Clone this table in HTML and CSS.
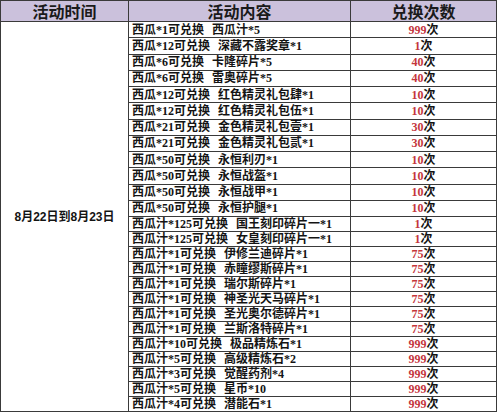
FILE: index.html
```html
<!DOCTYPE html>
<html lang="zh-CN">
<head>
<meta charset="utf-8">
<title>活动兑换</title>
<link rel="stylesheet" href="styles.css">
</head>
<body>
<div class="sheet">
  <div class="cell head">活动时间</div>
  <div class="cell head">活动内容</div>
  <div class="cell head">兑换次数</div>
  <div class="cell date">8月22日到8月23日</div>

  <div class="cell item"><span>西瓜*1可兑换</span><span class="gift">西瓜汁*5</span></div>
  <div class="cell count"><span class="n">999</span>次</div>
  <div class="cell item"><span>西瓜*12可兑换</span><span class="gift">深藏不露奖章*1</span></div>
  <div class="cell count"><span class="n">1</span>次</div>
  <div class="cell item"><span>西瓜*6可兑换</span><span class="gift">卡隆碎片*5</span></div>
  <div class="cell count"><span class="n">40</span>次</div>
  <div class="cell item"><span>西瓜*6可兑换</span><span class="gift">雷奥碎片*5</span></div>
  <div class="cell count"><span class="n">40</span>次</div>
  <div class="cell item"><span>西瓜*12可兑换</span><span class="gift">红色精灵礼包肆*1</span></div>
  <div class="cell count"><span class="n">10</span>次</div>
  <div class="cell item"><span>西瓜*12可兑换</span><span class="gift">红色精灵礼包伍*1</span></div>
  <div class="cell count"><span class="n">10</span>次</div>
  <div class="cell item"><span>西瓜*21可兑换</span><span class="gift">金色精灵礼包壹*1</span></div>
  <div class="cell count"><span class="n">30</span>次</div>
  <div class="cell item"><span>西瓜*21可兑换</span><span class="gift">金色精灵礼包贰*1</span></div>
  <div class="cell count"><span class="n">30</span>次</div>
  <div class="cell item"><span>西瓜*50可兑换</span><span class="gift">永恒利刃*1</span></div>
  <div class="cell count"><span class="n">10</span>次</div>
  <div class="cell item"><span>西瓜*50可兑换</span><span class="gift">永恒战盔*1</span></div>
  <div class="cell count"><span class="n">10</span>次</div>
  <div class="cell item"><span>西瓜*50可兑换</span><span class="gift">永恒战甲*1</span></div>
  <div class="cell count"><span class="n">10</span>次</div>
  <div class="cell item"><span>西瓜*50可兑换</span><span class="gift">永恒护腿*1</span></div>
  <div class="cell count"><span class="n">10</span>次</div>
  <div class="cell item"><span>西瓜汁*125可兑换</span><span class="gift">国王刻印碎片一*1</span></div>
  <div class="cell count"><span class="n">1</span>次</div>
  <div class="cell item"><span>西瓜汁*125可兑换</span><span class="gift">女皇刻印碎片一*1</span></div>
  <div class="cell count"><span class="n">1</span>次</div>
  <div class="cell item"><span>西瓜汁*1可兑换</span><span class="gift">伊修兰迪碎片*1</span></div>
  <div class="cell count"><span class="n">75</span>次</div>
  <div class="cell item"><span>西瓜汁*1可兑换</span><span class="gift">赤瞳缪斯碎片*1</span></div>
  <div class="cell count"><span class="n">75</span>次</div>
  <div class="cell item"><span>西瓜汁*1可兑换</span><span class="gift">瑞尔斯碎片*1</span></div>
  <div class="cell count"><span class="n">75</span>次</div>
  <div class="cell item"><span>西瓜汁*1可兑换</span><span class="gift">神圣光天马碎片*1</span></div>
  <div class="cell count"><span class="n">75</span>次</div>
  <div class="cell item"><span>西瓜汁*1可兑换</span><span class="gift">圣光奥尔德碎片*1</span></div>
  <div class="cell count"><span class="n">75</span>次</div>
  <div class="cell item"><span>西瓜汁*1可兑换</span><span class="gift">兰斯洛特碎片*1</span></div>
  <div class="cell count"><span class="n">75</span>次</div>
  <div class="cell item"><span>西瓜汁*10可兑换</span><span class="gift">极品精炼石*1</span></div>
  <div class="cell count"><span class="n">999</span>次</div>
  <div class="cell item"><span>西瓜汁*5可兑换</span><span class="gift">高级精炼石*2</span></div>
  <div class="cell count"><span class="n">999</span>次</div>
  <div class="cell item"><span>西瓜汁*3可兑换</span><span class="gift">觉醒药剂*4</span></div>
  <div class="cell count"><span class="n">999</span>次</div>
  <div class="cell item"><span>西瓜汁*5可兑换</span><span class="gift">星币*10</span></div>
  <div class="cell count"><span class="n">999</span>次</div>
  <div class="cell item"><span>西瓜汁*4可兑换</span><span class="gift">潜能石*1</span></div>
  <div class="cell count"><span class="n">999</span>次</div>
</div>
</body>
</html>
```

FILE: styles.css
```css
html, body {
  margin: 0;
  padding: 0;
  background: #ffffff;
}

.sheet {
  display: grid;
  width: 497px;
  box-sizing: border-box;
  padding: 1px;
  gap: 1px;
  background: #3a3a3a;
  grid-template-columns: 127px 221px 145px;
  grid-template-rows: 20px repeat(12, 15.25px) repeat(13, 14px);
  font-family: "Liberation Serif", "Noto Sans CJK SC", serif;
  font-weight: bold;
  font-size: 12px;
  line-height: 12px;
  color: #141414;
}

.cell {
  background: #ffffff;
  display: flex;
  align-items: center;
  white-space: nowrap;
  min-width: 0;
  min-height: 0;
}

.head {
  background: #cbc1dc;
  justify-content: center;
  font-family: "Noto Sans CJK SC", sans-serif;
  font-size: 16px;
  line-height: 20px;
  color: #1a1a1a;
}

.date {
  grid-column: 1;
  grid-row: 2 / 27;
  justify-content: center;
  font-family: "Liberation Sans", "Noto Sans CJK SC", sans-serif;
  font-size: 12px;
}

.item {
  grid-column: 2;
  padding-left: 3px;
}

.gift {
  margin-left: 8px;
}

.count {
  grid-column: 3;
  justify-content: center;
}

.n {
  color: #c4363c;
}
```
